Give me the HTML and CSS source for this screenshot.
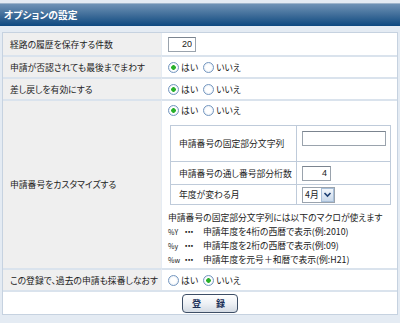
FILE: index.html
```html
<!DOCTYPE html>
<html lang="ja">
<head>
    <meta charset="UTF-8">
    <title>オプションの設定</title>
    <link rel="stylesheet" href="styles.css">
</head>
<body>
    <div class="titlebar">オプションの設定</div>
    <table class="opts">
        <tr class="r1">
            <th>経路の履歴を保存する件数</th>
            <td><input type="text" class="field num w28" value="20"></td>
        </tr>
        <tr>
            <th>申請が否認されても最後までまわす</th>
            <td><span class="radio on"></span>はい<span class="radio next"></span>いいえ</td>
        </tr>
        <tr>
            <th>差し戻しを有効にする</th>
            <td><span class="radio on"></span>はい<span class="radio next"></span>いいえ</td>
        </tr>
        <tr class="r4">
            <th>申請番号をカスタマイズする</th>
            <td>
                <div class="choice"><span class="radio on"></span>はい<span class="radio next"></span>いいえ</div>
                <table class="inner">
                    <tr class="i1">
                        <th>申請番号の固定部分文字列</th>
                        <td><input type="text" class="field w84" value=""></td>
                    </tr>
                    <tr class="i2">
                        <th>申請番号の通し番号部分桁数</th>
                        <td><input type="text" class="field num w29" value="4"></td>
                    </tr>
                    <tr class="i3">
                        <th>年度が変わる月</th>
                        <td><span class="select">4月<span class="arrow"><svg width="9" height="9" viewBox="0 0 9 9"><path d="M1.5 3 L4.5 6 L7.5 3" fill="none" stroke="#1d3f72" stroke-width="1.6"/></svg></span></span></td>
                    </tr>
                </table>
                <div class="macros">
                    <p class="lead">申請番号の固定部分文字列には以下のマクロが使えます</p>
                    <p><span class="key">%Y</span><span class="dots">・・・</span>申請年度を4桁の西暦で表示(例:2010)</p>
                    <p><span class="key">%y</span><span class="dots">・・・</span>申請年度を2桁の西暦で表示(例:09)</p>
                    <p><span class="key">%w</span><span class="dots">・・・</span>申請年度を元号＋和暦で表示(例:H21)</p>
                </div>
            </td>
        </tr>
        <tr>
            <th>この登録で、過去の申請も採番しなおす</th>
            <td><span class="radio"></span>はい<span class="radio next on"></span>いいえ</td>
        </tr>
        <tr class="r6">
            <td colspan="2"><button class="submit">登　録</button></td>
        </tr>
    </table>
</body>
</html>
```

FILE: styles.css
```css
body {
    margin: 0;
    padding-top: 3px;
    background: #e4ebf3;
    font-family: "Noto Sans CJK JP", "Noto Sans", sans-serif;
    font-size: 8.8px;
    font-feature-settings: "palt";
    color: #222;
}
.titlebar {
    height: 22px;
    line-height: 22px;
    padding-left: 4px;
    border-top: 1px solid #9fb5cc;
    background: linear-gradient(#6f92b6, #3f6d99 50%, #0d4880);
    color: #fff;
    font-weight: bold;
    font-size: 9.8px;
}
.opts {
    margin: 6px 0 0 2px;
    width: 396px;
    border: 1px solid #c6d2e0;
    border-spacing: 0;
    background: #fff;
}
.opts > tbody > tr > th,
.opts > tbody > tr > td {
    height: 20px;
    padding: 0 0 0 6px;
    vertical-align: middle;
    border-top: 2px solid #dae3ed;
    white-space: nowrap;
}
.opts > tbody > tr.r1 > th,
.opts > tbody > tr.r1 > td {
    border-top: 0;
    height: 22px;
}
.opts > tbody > tr > th {
    width: 151px;
    padding-left: 7px;
    text-align: left;
    font-weight: normal;
    background: #efefef;
    border-right: 1px solid #e6ecf3;
}
.opts > tbody > tr.r4 > td {
    padding-top: 3px;
    padding-bottom: 1px;
}
.opts > tbody > tr.r6 > td {
    height: 22px;
    padding-left: 179px;
}
.radio {
    display: inline-block;
    width: 9px;
    height: 9px;
    margin: 0 2px 0 0;
    border: 1px solid #7597c0;
    border-radius: 50%;
    background: radial-gradient(circle, #fff 40%, #d9e4f0);
    vertical-align: -2px;
}
.radio.next {
    margin-left: 5px;
}
.radio.on {
    background: radial-gradient(circle, #28b02a 0 2px, #fff 2.6px, #fff 45%, #d9e4f0);
}
.field {
    box-sizing: border-box;
    height: 15px;
    padding: 0 3px;
    border: 1px solid #9aa3ad;
    border-top-color: #7b848f;
    font: 9px "Liberation Sans", sans-serif;
    color: #222;
    vertical-align: middle;
}
.num { text-align: right; }
.w28 { width: 28px; }
.w29 { width: 29px; }
.w84 { width: 84px; }
.choice {
    height: 14px;
    line-height: 14px;
}
.inner {
    margin: 7px 0 0 2px;
    width: 221px;
    border: 1px solid #bfcbda;
    border-spacing: 0;
}
.inner th,
.inner td {
    border-top: 1px solid #bfcbda;
    padding: 0;
}
.inner tr.i1 th,
.inner tr.i1 td { border-top: 0; }
.inner th {
    width: 117px;
    padding-left: 8px;
    text-align: left;
    font-weight: normal;
    border-right: 1px solid #bfcbda;
}
.inner td { padding-left: 5px; }
.inner tr.i1 th { height: 35px; }
.inner tr.i1 td { vertical-align: top; padding-top: 5px; }
.inner tr.i2 th { height: 22px; }
.inner tr.i3 th { height: 19px; }
.select {
    display: inline-flex;
    align-items: center;
    height: 14px;
    padding-left: 2px;
    border: 1px solid #9aa3ad;
    vertical-align: middle;
}
.arrow {
    display: inline-flex;
    align-items: center;
    justify-content: center;
    width: 11px;
    height: 12px;
    margin-left: 2px;
    border: 1px solid #a8bfd9;
    background: linear-gradient(#f2f6fb, #c9d8ea);
}
.macros {
    margin-top: 6px;
}
.macros p {
    margin: 0;
    line-height: 14px;
}
.key {
    display: inline-block;
    width: 16px;
    font-size: 7px;
}
.dots {
    display: inline-block;
    width: 19px;
    letter-spacing: -1.5px;
}
.submit {
    width: 56px;
    height: 19px;
    padding: 0;
    border: 1px solid #3d4e66;
    border-radius: 4px;
    background: linear-gradient(#ffffff, #eef1f5 50%, #d3dae3);
    color: #1b2f57;
    font: bold 9px "Noto Sans CJK JP", sans-serif;
    letter-spacing: 3px;
}
```
